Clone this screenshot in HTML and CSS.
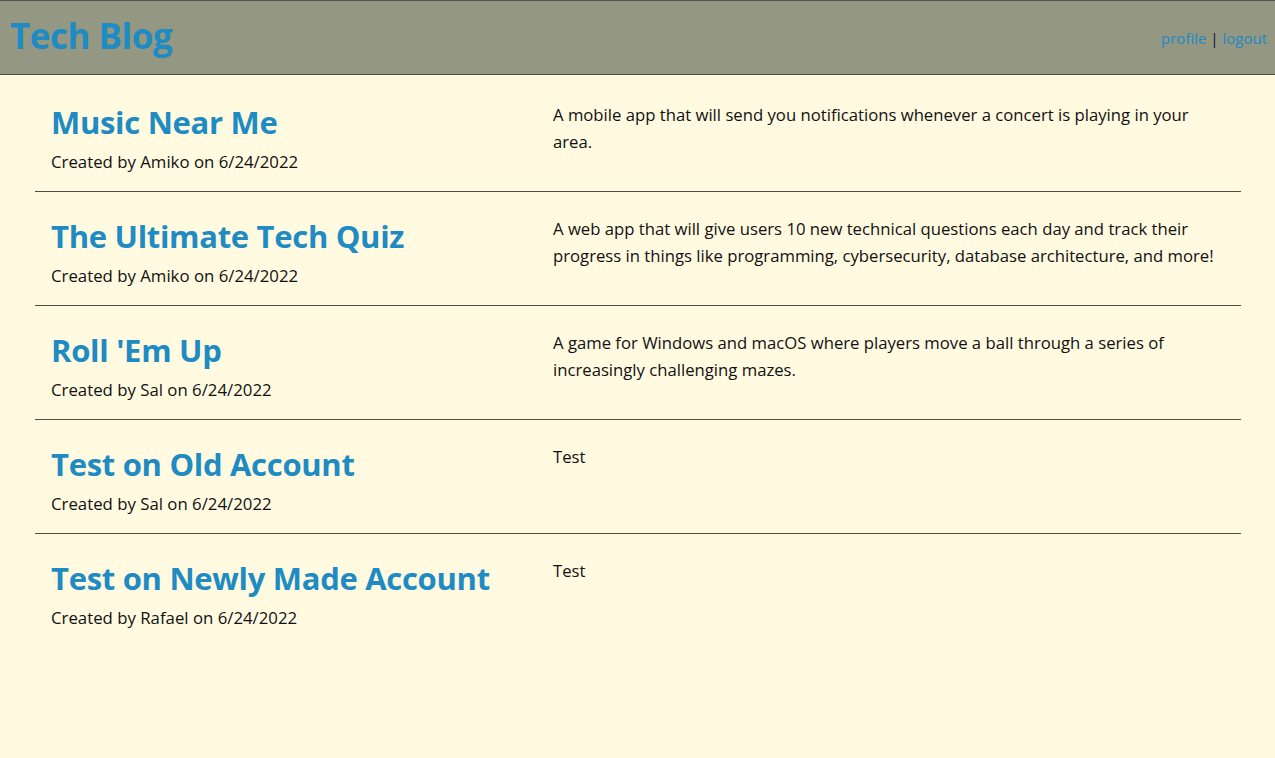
FILE: index.html
```html
<!DOCTYPE html>
<html lang="en">
<head>
<meta charset="utf-8">
<title>Tech Blog</title>
<link rel="stylesheet" href="styles.css">
</head>
<body>
<header class="site-header">
  <h1 class="brand">Tech Blog</h1>
  <nav class="nav"><a href="#">profile</a> | <a href="#">logout</a></nav>
</header>
<main class="posts">
  <article class="post">
    <div class="post-head">
      <h2 class="post-title">Music Near Me</h2>
      <p class="post-meta">Created by Amiko on 6/24/2022</p>
    </div>
    <p class="post-body">A mobile app that will send you notifications whenever a concert is playing in your area.</p>
  </article>
  <article class="post">
    <div class="post-head">
      <h2 class="post-title">The Ultimate Tech Quiz</h2>
      <p class="post-meta">Created by Amiko on 6/24/2022</p>
    </div>
    <p class="post-body">A web app that will give users 10 new technical questions each day and track their progress in things like programming, cybersecurity, database architecture, and more!</p>
  </article>
  <article class="post">
    <div class="post-head">
      <h2 class="post-title">Roll 'Em Up</h2>
      <p class="post-meta">Created by Sal on 6/24/2022</p>
    </div>
    <p class="post-body">A game for Windows and macOS where players move a ball through a series of increasingly challenging mazes.</p>
  </article>
  <article class="post">
    <div class="post-head">
      <h2 class="post-title">Test on Old Account</h2>
      <p class="post-meta">Created by Sal on 6/24/2022</p>
    </div>
    <p class="post-body">Test</p>
  </article>
  <article class="post">
    <div class="post-head">
      <h2 class="post-title">Test on Newly Made Account</h2>
      <p class="post-meta">Created by Rafael on 6/24/2022</p>
    </div>
    <p class="post-body">Test</p>
  </article>
</main>
</body>
</html>
```
FILE: styles.css
```css
* { box-sizing: border-box; }
html, body { margin: 0; padding: 0; }
body {
  background: #fffae0;
  font-family: "Open Sans", "Noto Sans", sans-serif;
  color: #111;
  min-height: 758px;
}
.site-header {
  height: 75px;
  background: #949781;
  border-top: 1px solid #555;
  border-bottom: 1px solid #5a4a42;
  display: flex;
  align-items: center;
  justify-content: space-between;
  padding: 0 8px 4px 10px;
}
.brand {
  margin: 0;
  font-size: 35px;
  font-weight: 700;
  color: #1e8bc3;
  line-height: 1;
  letter-spacing: -0.5px;
}
.nav {
  font-size: 15px;
  color: #001040;
  padding-top: 4px;
}
.nav a { color: #1e8bc3; text-decoration: none; }
.posts {
  padding: 3px 34px 0 35px;
}
.post {
  display: grid;
  grid-template-columns: 502px 1fr;
  padding: 23px 16px 16px;
  border-bottom: 1px solid #5a4a42;
}
.post:last-child { border-bottom: none; }
.post-head { padding-top: 1px; }
.post-title {
  margin: 0;
  font-size: 31px;
  line-height: 40px;
  font-weight: 700;
  color: #1e8bc3;
  letter-spacing: -0.3px;
}
.post-meta {
  margin: 6px 0 0;
  font-size: 16.8px;
  line-height: 27px;
}
.post-body {
  margin: 0;
  font-size: 16.7px;
  line-height: 27px;
}
```
